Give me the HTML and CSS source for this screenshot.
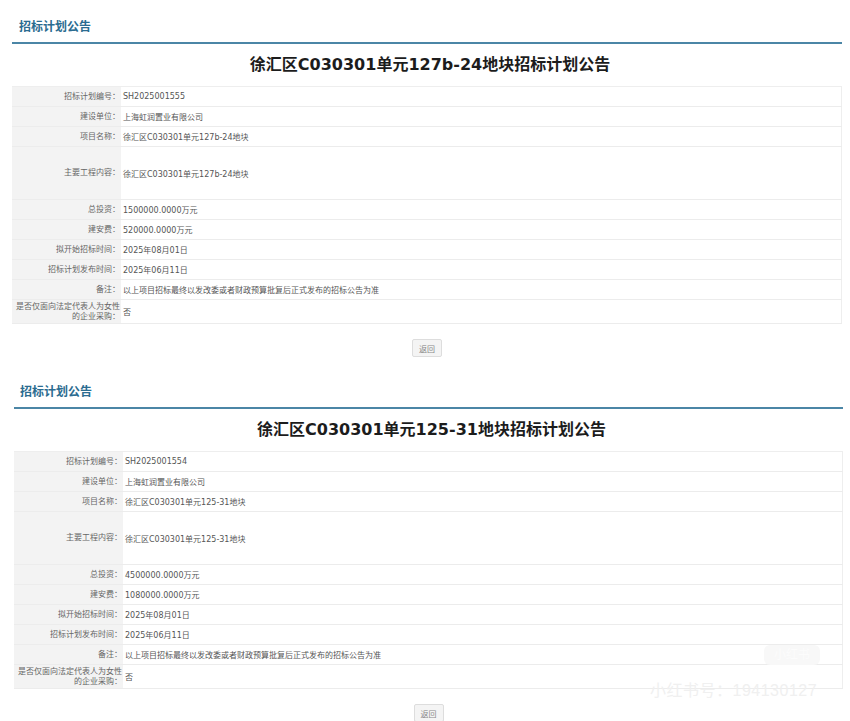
FILE: index.html
```html
<!DOCTYPE html>
<html lang="zh-CN">
<head>
  <meta charset="UTF-8">
  <title>招标计划公告</title>
  <link rel="stylesheet" href="styles.css">
</head>
<body>
<div class="notice">
  <div class="notice-head"><span class="notice-label">招标计划公告</span></div>
  <h1 class="notice-title">徐汇区C030301单元127b-24地块招标计划公告</h1>
  <table class="info">
    <tr><th>招标计划编号：</th><td>SH2025001555</td></tr>
    <tr><th>建设单位：</th><td>上海虹润置业有限公司</td></tr>
    <tr><th>项目名称：</th><td>徐汇区C030301单元127b-24地块</td></tr>
    <tr class="tall"><th>主要工程内容：</th><td>徐汇区C030301单元127b-24地块</td></tr>
    <tr><th>总投资：</th><td>1500000.0000万元</td></tr>
    <tr><th>建安费：</th><td>520000.0000万元</td></tr>
    <tr><th>拟开始招标时间：</th><td>2025年08月01日</td></tr>
    <tr><th>招标计划发布时间：</th><td>2025年06月11日</td></tr>
    <tr><th>备注：</th><td>以上项目招标最终以发改委或者财政预算批复后正式发布的招标公告为准</td></tr>
    <tr class="last"><th>是否仅面向法定代表人为女性的企业采购：</th><td>否</td></tr>
  </table>
  <div class="actions"><button class="back-btn">返回</button></div>
</div>
<div class="notice second">
  <div class="notice-head"><span class="notice-label">招标计划公告</span></div>
  <h1 class="notice-title">徐汇区C030301单元125-31地块招标计划公告</h1>
  <table class="info">
    <tr><th>招标计划编号：</th><td>SH2025001554</td></tr>
    <tr><th>建设单位：</th><td>上海虹润置业有限公司</td></tr>
    <tr><th>项目名称：</th><td>徐汇区C030301单元125-31地块</td></tr>
    <tr class="tall"><th>主要工程内容：</th><td>徐汇区C030301单元125-31地块</td></tr>
    <tr><th>总投资：</th><td>4500000.0000万元</td></tr>
    <tr><th>建安费：</th><td>1080000.0000万元</td></tr>
    <tr><th>拟开始招标时间：</th><td>2025年08月01日</td></tr>
    <tr><th>招标计划发布时间：</th><td>2025年06月11日</td></tr>
    <tr><th>备注：</th><td>以上项目招标最终以发改委或者财政预算批复后正式发布的招标公告为准</td></tr>
    <tr class="last"><th>是否仅面向法定代表人为女性的企业采购：</th><td>否</td></tr>
  </table>
  <div class="actions"><button class="back-btn">返回</button></div>
</div>
<div class="stamp">小红书</div>
<div class="watermark">小红书号：194130127</div>
</body>
</html>
```

FILE: styles.css
```css
html, body {
  height: 721px;
  overflow: hidden;
}

body {
  margin: 0;
  background: #fff;
  font-family: "DejaVu Sans", "Noto Sans CJK SC", sans-serif;
  font-size: 8px;
  color: #555;
}

.notice {
  height: 365px;
  padding: 0 8px 0 12px;
}

.notice.second {
  padding: 0 7px 0 14px;
}

.notice-head {
  height: 42px;
  border-bottom: 2px solid #4b86a6;
  box-sizing: content-box;
}

.notice-label {
  display: block;
  padding: 19px 0 0 7px;
  font-size: 12px;
  line-height: 16px;
  font-weight: bold;
  color: #2b6c90;
}

.second .notice-label {
  padding-left: 6px;
}

.notice-title {
  margin: 0;
  padding: 11px 0 0 6px;
  height: 31px;
  font-size: 16px;
  line-height: 20px;
  font-weight: bold;
  text-align: center;
  color: #1c1c1c;
}

.info {
  width: 100%;
  border-collapse: collapse;
  table-layout: fixed;
  border-right: 1px solid #eee;
  border-top: 1px solid #eee;
}

.info tr {
  height: 20px;
}

.info tr.tall {
  height: 53px;
}

.info tr.last {
  height: 24px;
}

.info th {
  width: 108px;
  padding: 0 1px 0 0;
  background: #f3f3f3;
  border-bottom: 1px solid #ececec;
  font-weight: normal;
  text-align: right;
  line-height: 10px;
  color: #666;
}

.info td {
  padding: 0 0 0 2px;
  border-bottom: 1px solid #ececec;
  color: #555;
}

.actions {
  padding-top: 15px;
  text-align: center;
}

.back-btn {
  width: 30px;
  height: 18px;
  padding: 0;
  background: #f4f4f4;
  border: 1px solid #ddd;
  border-radius: 2px;
  font-family: inherit;
  font-size: 8px;
  color: #888;
}

.stamp {
  position: absolute;
  left: 764px;
  top: 645px;
  width: 56px;
  height: 20px;
  border-radius: 6px;
  background: #f8f8f8;
  font-size: 12px;
  line-height: 20px;
  text-align: center;
  color: #fcfcfc;
}

.watermark {
  position: absolute;
  left: 650px;
  top: 681px;
  font-family: "Liberation Sans", "Noto Sans CJK SC", sans-serif;
  font-size: 16px;
  line-height: 20px;
  letter-spacing: 0.5px;
  color: #f0f0f0;
}
```
